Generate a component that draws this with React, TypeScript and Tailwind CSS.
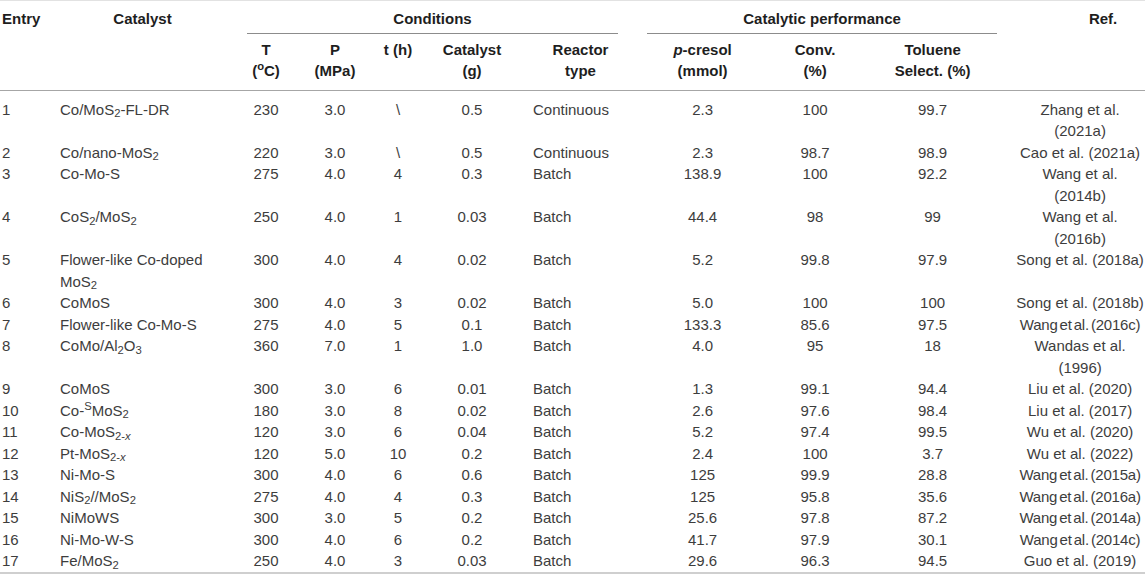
import type { ReactNode } from 'react';

type Row = {
  e: string;
  cat: ReactNode;
  T: string;
  P: string;
  t: string;
  g: string;
  r: string;
  pc: string;
  conv: string;
  tol: string;
  ref: string;
  tight?: boolean;
};

const S2 = <sub>2</sub>;
const S2x = (
  <sub>
    2-<i>x</i>
  </sub>
);

const rows: Row[] = [
  { e: '1', cat: <>Co/MoS{S2}-FL-DR</>, T: '230', P: '3.0', t: '\\', g: '0.5', r: 'Continuous', pc: '2.3', conv: '100', tol: '99.7', ref: 'Zhang et al. (2021a)' },
  { e: '2', cat: <>Co/nano-MoS{S2}</>, T: '220', P: '3.0', t: '\\', g: '0.5', r: 'Continuous', pc: '2.3', conv: '98.7', tol: '98.9', ref: 'Cao et al. (2021a)' },
  { e: '3', cat: 'Co-Mo-S', T: '275', P: '4.0', t: '4', g: '0.3', r: 'Batch', pc: '138.9', conv: '100', tol: '92.2', ref: 'Wang et al. (2014b)' },
  { e: '4', cat: <>CoS{S2}/MoS{S2}</>, T: '250', P: '4.0', t: '1', g: '0.03', r: 'Batch', pc: '44.4', conv: '98', tol: '99', ref: 'Wang et al. (2016b)' },
  { e: '5', cat: <>Flower-like Co-doped MoS{S2}</>, T: '300', P: '4.0', t: '4', g: '0.02', r: 'Batch', pc: '5.2', conv: '99.8', tol: '97.9', ref: 'Song et al. (2018a)' },
  { e: '6', cat: 'CoMoS', T: '300', P: '4.0', t: '3', g: '0.02', r: 'Batch', pc: '5.0', conv: '100', tol: '100', ref: 'Song et al. (2018b)' },
  { e: '7', cat: 'Flower-like Co-Mo-S', T: '275', P: '4.0', t: '5', g: '0.1', r: 'Batch', pc: '133.3', conv: '85.6', tol: '97.5', ref: 'Wang et al. (2016c)', tight: true },
  { e: '8', cat: <>CoMo/Al{S2}O<sub>3</sub></>, T: '360', P: '7.0', t: '1', g: '1.0', r: 'Batch', pc: '4.0', conv: '95', tol: '18', ref: 'Wandas et al. (1996)' },
  { e: '9', cat: 'CoMoS', T: '300', P: '3.0', t: '6', g: '0.01', r: 'Batch', pc: '1.3', conv: '99.1', tol: '94.4', ref: 'Liu et al. (2020)' },
  { e: '10', cat: <>Co-<sup>S</sup>MoS{S2}</>, T: '180', P: '3.0', t: '8', g: '0.02', r: 'Batch', pc: '2.6', conv: '97.6', tol: '98.4', ref: 'Liu et al. (2017)' },
  { e: '11', cat: <>Co-MoS{S2x}</>, T: '120', P: '3.0', t: '6', g: '0.04', r: 'Batch', pc: '5.2', conv: '97.4', tol: '99.5', ref: 'Wu et al. (2020)' },
  { e: '12', cat: <>Pt-MoS{S2x}</>, T: '120', P: '5.0', t: '10', g: '0.2', r: 'Batch', pc: '2.4', conv: '100', tol: '3.7', ref: 'Wu et al. (2022)' },
  { e: '13', cat: 'Ni-Mo-S', T: '300', P: '4.0', t: '6', g: '0.6', r: 'Batch', pc: '125', conv: '99.9', tol: '28.8', ref: 'Wang et al. (2015a)', tight: true },
  { e: '14', cat: <>NiS{S2}//MoS{S2}</>, T: '275', P: '4.0', t: '4', g: '0.3', r: 'Batch', pc: '125', conv: '95.8', tol: '35.6', ref: 'Wang et al. (2016a)', tight: true },
  { e: '15', cat: 'NiMoWS', T: '300', P: '3.0', t: '5', g: '0.2', r: 'Batch', pc: '25.6', conv: '97.8', tol: '87.2', ref: 'Wang et al. (2014a)', tight: true },
  { e: '16', cat: 'Ni-Mo-W-S', T: '300', P: '4.0', t: '6', g: '0.2', r: 'Batch', pc: '41.7', conv: '97.9', tol: '30.1', ref: 'Wang et al. (2014c)', tight: true },
  { e: '17', cat: <>Fe/MoS{S2}</>, T: '250', P: '4.0', t: '3', g: '0.03', r: 'Batch', pc: '29.6', conv: '96.3', tol: '94.5', ref: 'Guo et al. (2019)' },
];

export default function App() {
  return (
    <div className="w-[1145px] h-[580px] bg-white overflow-hidden font-['Liberation_Sans',Arial,sans-serif] text-[15px] leading-[21.5px]">
      <table className="table-fixed border-collapse w-[1145px]">
        <colgroup>
          <col className="w-[55px]" />
          <col className="w-[175px]" />
          <col className="w-[72px]" />
          <col className="w-[66px]" />
          <col className="w-[60px]" />
          <col className="w-[88px]" />
          <col className="w-[129px]" />
          <col className="w-[115px]" />
          <col className="w-[110px]" />
          <col className="w-[125px]" />
          <col className="w-[150px]" />
        </colgroup>
        <thead className="text-[#1e1e1e] font-bold">
          {/* group headers */}
          <tr className="border-t border-[#e2e2e2]">
            <th className="pt-[7px] pl-[2px] text-left align-top font-bold">Entry</th>
            <th className="pt-[7px] text-center align-top font-bold">Catalyst</th>
            <th colSpan={5} className="pt-[7px] p-0 align-top font-bold">
              <div className="ml-[17px] mr-[27px] pb-[3px] border-b border-[#8c8c8c] text-center">Conditions</div>
            </th>
            <th colSpan={3} className="pt-[7px] p-0 align-top font-bold">
              <div className="ml-[2px] mr-[-2px] pb-[3px] border-b border-[#8c8c8c] text-center">Catalytic performance</div>
            </th>
            <th className="pt-[7px] pl-[66px] text-center align-top font-bold">Ref.</th>
          </tr>
          {/* column headers */}
          <tr className="border-b border-[#a6a6a6]">
            <th className="pt-[5px] pb-[8px]" />
            <th />
            <th className="pt-[5px] pb-[8px] text-center align-top font-bold">
              T<br />(<sup>o</sup>C)
            </th>
            <th className="pt-[5px] pb-[8px] text-center align-top font-bold">
              P<br />(MPa)
            </th>
            <th className="pt-[5px] pb-[8px] text-center align-top font-bold">t (h)</th>
            <th className="pt-[5px] pb-[8px] text-center align-top font-bold">
              Catalyst<br />(g)
            </th>
            <th className="pt-[5px] pb-[8px] text-center align-top font-bold">
              Reactor<br />type
            </th>
            <th className="pt-[5px] pb-[8px] text-center align-top font-bold">
              <i>p</i>-cresol<br />(mmol)
            </th>
            <th className="pt-[5px] pb-[8px] text-center align-top font-bold">
              Conv.<br />(%)
            </th>
            <th className="pt-[5px] pb-[8px] text-center align-top font-bold">
              Toluene<br />Select. (%)
            </th>
            <th />
          </tr>
        </thead>
        <tbody className="text-[#3d3d3d] border-b-2 border-[#cfcfcf]">
          {rows.map((r, i) => {
            const pt = i === 0 ? 'pt-[8px]' : 'pt-0';
            return (
              <tr key={r.e}>
                <td className={`${pt} pl-[2px] align-top text-left`}>{r.e}</td>
                <td className={`${pt} pl-[5px] align-top text-left`}>{r.cat}</td>
                <td className={`${pt} align-top text-center`}>{r.T}</td>
                <td className={`${pt} align-top text-center`}>{r.P}</td>
                <td className={`${pt} align-top text-center`}>{r.t}</td>
                <td className={`${pt} align-top text-center`}>{r.g}</td>
                <td className={`${pt} pl-[17px] align-top text-left`}>{r.r}</td>
                <td className={`${pt} align-top text-center`}>{r.pc}</td>
                <td className={`${pt} align-top text-center`}>{r.conv}</td>
                <td className={`${pt} align-top text-center`}>{r.tol}</td>
                <td className={`${pt} pl-[20px] align-top text-center`}>
                  {r.tight ? (
                    <span className="whitespace-nowrap tracking-[-0.2px] [word-spacing:-2px]">{r.ref}</span>
                  ) : (
                    r.ref
                  )}
                </td>
              </tr>
            );
          })}
        </tbody>
      </table>
    </div>
  );
}
